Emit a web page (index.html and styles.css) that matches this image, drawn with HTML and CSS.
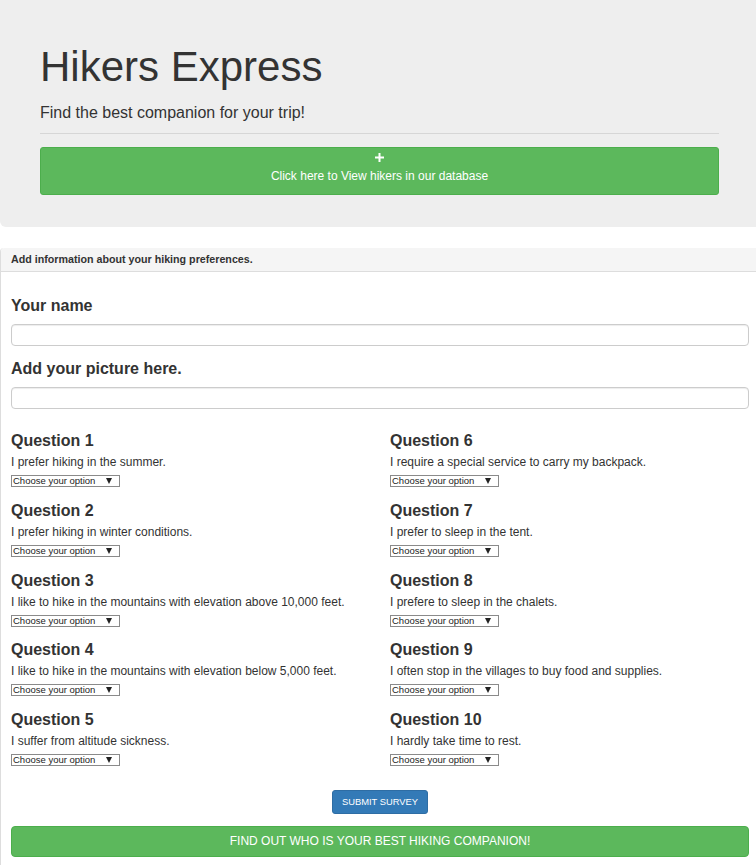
FILE: index.html
```html
<!DOCTYPE html>
<html lang="en">
<head>
<meta charset="utf-8">
<title>Hikers Express</title>
<link rel="stylesheet" href="styles.css">
</head>
<body>
<div class="page">
  <header class="jumbotron">
    <h1 class="title">Hikers Express</h1>
    <p class="lead">Find the best companion for your trip!</p>
    <hr class="rule">
    <button class="btn-view" type="button">
      <svg class="plus" width="9" height="9" viewBox="0 0 9 9" aria-hidden="true"><path d="M3.5 0h2v3.5H9v2H5.5V9h-2V5.5H0v-2h3.5z" fill="#fff"/></svg>
      <span>Click here to View hikers in our database</span>
    </button>
  </header>

  <section class="panel">
    <div class="panel-heading">Add information about your hiking preferences.</div>
    <div class="panel-body">
      <h3 class="field-label">Your name</h3>
      <input class="text-input" type="text">
      <h3 class="field-label">Add your picture here.</h3>
      <input class="text-input" type="text">

      <div class="questions">
        <div class="col">
          <div class="q"><h3 class="q-title">Question 1</h3><p class="q-text">I prefer hiking in the summer.</p><span class="sel"><select><option>Choose your option</option></select></span></div>
          <div class="q"><h3 class="q-title">Question 2</h3><p class="q-text">I prefer hiking in winter conditions.</p><span class="sel"><select><option>Choose your option</option></select></span></div>
          <div class="q"><h3 class="q-title">Question 3</h3><p class="q-text">I like to hike in the mountains with elevation above 10,000 feet.</p><span class="sel"><select><option>Choose your option</option></select></span></div>
          <div class="q"><h3 class="q-title">Question 4</h3><p class="q-text">I like to hike in the mountains with elevation below 5,000 feet.</p><span class="sel"><select><option>Choose your option</option></select></span></div>
          <div class="q"><h3 class="q-title">Question 5</h3><p class="q-text">I suffer from altitude sickness.</p><span class="sel"><select><option>Choose your option</option></select></span></div>
        </div>
        <div class="col">
          <div class="q"><h3 class="q-title">Question 6</h3><p class="q-text">I require a special service to carry my backpack.</p><span class="sel"><select><option>Choose your option</option></select></span></div>
          <div class="q"><h3 class="q-title">Question 7</h3><p class="q-text">I prefer to sleep in the tent.</p><span class="sel"><select><option>Choose your option</option></select></span></div>
          <div class="q"><h3 class="q-title">Question 8</h3><p class="q-text">I prefere to sleep in the chalets.</p><span class="sel"><select><option>Choose your option</option></select></span></div>
          <div class="q"><h3 class="q-title">Question 9</h3><p class="q-text">I often stop in the villages to buy food and supplies.</p><span class="sel"><select><option>Choose your option</option></select></span></div>
          <div class="q"><h3 class="q-title">Question 10</h3><p class="q-text">I hardly take time to rest.</p><span class="sel"><select><option>Choose your option</option></select></span></div>
        </div>
      </div>

      <div class="submit-row">
        <button class="btn-submit" type="button">SUBMIT SURVEY</button>
      </div>
      <button class="btn-find" type="button">FIND OUT WHO IS YOUR BEST HIKING COMPANION!</button>
    </div>
  </section>
</div>
</body>
</html>
```

FILE: styles.css
```css
html, body {
  margin: 0;
  padding: 0;
  overflow: hidden;
  background: #fff;
}
body {
  font-family: "Liberation Sans", Arial, Helvetica, sans-serif;
  color: #333;
  font-size: 12px;
  line-height: 17px;
}
.page {
  width: 759px;
}
.jumbotron {
  background: #eeeeee;
  padding: 44px 40px 32px 40px;
  border-radius: 0 0 0 6px;
}
.title {
  margin: 0;
  font-size: 42px;
  font-weight: normal;
  line-height: 46px;
  color: #333;
}
.lead {
  margin: 11px 0 0 0;
  font-size: 16px;
  line-height: 23px;
  color: #333;
}
.rule {
  margin: 9px 0 13px 0;
  border: 0;
  border-top: 1px solid #d6d6d6;
  height: 0;
}
.btn-view {
  display: flex;
  flex-direction: column;
  align-items: center;
  justify-content: flex-start;
  box-sizing: border-box;
  width: 100%;
  height: 48px;
  margin: 0;
  padding: 4.5px 0 0 0;
  background: #5cb85c;
  border: 1px solid #4cae4c;
  border-radius: 3px;
  color: #fff;
  font-family: "Liberation Sans", Arial, sans-serif;
  font-size: 12px;
  line-height: 17px;
  gap: 6.5px;
}
.plus {
  display: block;
}
.panel {
  margin-top: 21px;
  border-left: 1px solid #ddd;
  border-radius: 4px 0 0 0;
}
.panel-heading {
  background: #f5f5f5;
  border-bottom: 1px solid #ddd;
  padding: 3px 10px;
  font-size: 10.7px;
  font-weight: bold;
  line-height: 17px;
  color: #333;
  border-radius: 4px 0 0 0;
}
.panel-body {
  padding: 11px 10px 20px 10px;
}
.field-label {
  margin: 14px 0 9px 0;
  font-size: 16px;
  font-weight: bold;
  line-height: 18px;
}
.text-input {
  display: block;
  box-sizing: border-box;
  width: 738px;
  height: 22px;
  margin: 0;
  border: 1px solid #ccc;
  border-radius: 4px;
  box-shadow: inset 0 1px 1px rgba(0,0,0,0.075);
  background: #fff;
}
.questions {
  display: grid;
  grid-template-columns: 358px 358px;
  column-gap: 21px;
  margin-top: 23px;
}
.col {
  display: flex;
  flex-direction: column;
}
.q {
  height: 70px;
}
.q:nth-child(3) {
  height: 69px;
}
.q-title {
  margin: 0;
  font-size: 16px;
  font-weight: bold;
  line-height: 18px;
}
.q-text {
  margin: 4px 0 1px 0;
  font-size: 12px;
  line-height: 17px;
}
.sel {
  position: relative;
  display: inline-block;
  width: 109px;
  height: 12px;
}
.sel select {
  -webkit-appearance: none;
  appearance: none;
  box-sizing: border-box;
  display: block;
  width: 109px;
  height: 12px;
  margin: 0;
  padding: 0 0 0 1px;
  border: 1px solid #8a8a8a;
  border-radius: 0;
  background: #fff;
  font-family: "Liberation Sans", Arial, sans-serif;
  font-size: 9.5px;
  line-height: 10px;
  color: #222;
}
.sel::after {
  content: "";
  position: absolute;
  right: 8px;
  top: 3px;
  width: 0;
  height: 0;
  border-left: 3px solid transparent;
  border-right: 3px solid transparent;
  border-top: 6px solid #222;
  pointer-events: none;
}
.submit-row {
  display: flex;
  justify-content: center;
  margin-top: 9px;
}
.btn-submit {
  height: 24px;
  padding: 0 9px;
  margin: 0;
  background: #337ab7;
  border: 1px solid #2e6da4;
  border-radius: 3px;
  color: #fff;
  font-family: "Liberation Sans", Arial, sans-serif;
  font-size: 9.4px;
  line-height: 14px;
}
.btn-find {
  display: block;
  width: 738px;
  height: 31px;
  margin: 12px 0 0 0;
  padding: 0;
  background: #5cb85c;
  border: 1px solid #4cae4c;
  border-radius: 4px;
  color: #fff;
  font-family: "Liberation Sans", Arial, sans-serif;
  font-size: 12px;
  line-height: 17px;
}
```
